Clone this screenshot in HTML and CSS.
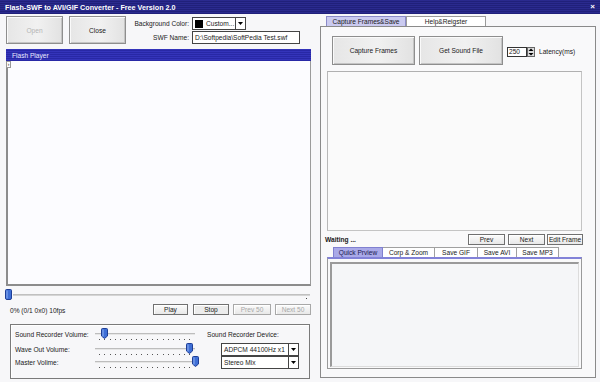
FILE: index.html
```html
<!DOCTYPE html>
<html>
<head>
<meta charset="utf-8">
<link rel="stylesheet" href="styles.css">
</head>
<body>
<div class="window">
  <div class="titlebar">
    <span class="title">Flash-SWF to AVI/GIF Converter - Free Version 2.0</span>
    <span class="xbtn">×</span>
  </div>
  <div class="main">
    <div class="left">
      <div class="toprow">
        <div class="bigbtn disabled">Open</div>
        <div class="bigbtn">Close</div>
        <div class="fields">
          <div class="frow">
            <span class="lbl">Background Color:</span>
            <div class="combo colorcombo"><span class="swatch"></span><span class="ctext">Custom...</span><span class="arrow"><svg width="5" height="3" viewBox="0 0 5 3"><path d="M0 0H5L2.5 3Z" fill="#000"/></svg></span></div>
          </div>
          <div class="frow">
            <span class="lbl">SWF Name:</span>
            <div class="textbox">D:\Softpedia\SoftPedia Test.swf</div>
          </div>
        </div>
      </div>
      <div class="player">
        <div class="phead">Flash Player</div>
        <div class="pbody"><span class="pmark">›</span></div>
      </div>
      <div class="seek">
        <div class="seektrack"></div>
        <span class="seekdot"></span>
        <svg class="thumb seekthumb" width="7" height="11" viewBox="0 0 7 11"><path d="M1.5 0.5H5.5Q6.5 0.5 6.5 1.5V9Q6.5 10.5 5 10.5H2Q0.5 10.5 0.5 9V1.5Q0.5 0.5 1.5 0.5Z" fill="#3f6fd6" stroke="#1e3e96"/><path d="M2 1.5V9.5" stroke="#8fb0f0"/></svg>
      </div>
      <div class="status">
        <span class="stext">0% (0/1 0x0) 10fps</span>
        <div class="sbtns">
          <div class="btn w35">Play</div>
          <div class="btn w36 stop">Stop</div>
          <div class="btn w38 disabled">Prev 50</div>
          <div class="btn w36 disabled">Next 50</div>
        </div>
      </div>
      <div class="group">
        <div class="grow r1">
          <span class="glbl">Sound Recorder Volume:</span>
          <div class="slider">
            <div class="strack"></div><div class="sticks"></div>
            <svg class="thumb" style="left:6px" width="7" height="11" viewBox="0 0 7 11"><path d="M1.5 0.5H5.5Q6.5 0.5 6.5 1.5V8L3.5 10.5L0.5 8V1.5Q0.5 0.5 1.5 0.5Z" fill="#3f6fd6" stroke="#1e3e96"/><path d="M2 1.5V8.5" stroke="#8fb0f0"/></svg>
          </div>
          <span class="devlbl">Sound Recorder Device:</span>
        </div>
        <div class="grow r2">
          <span class="glbl">Wave Out Volume:</span>
          <div class="slider">
            <div class="strack"></div><div class="sticks"></div>
            <svg class="thumb" style="left:91px" width="7" height="11" viewBox="0 0 7 11"><path d="M1.5 0.5H5.5Q6.5 0.5 6.5 1.5V8L3.5 10.5L0.5 8V1.5Q0.5 0.5 1.5 0.5Z" fill="#3f6fd6" stroke="#1e3e96"/><path d="M2 1.5V8.5" stroke="#8fb0f0"/></svg>
          </div>
          <div class="combo devcombo"><span class="ctext">ADPCM 44100Hz x1</span><span class="arrow"><svg width="5" height="3" viewBox="0 0 5 3"><path d="M0 0H5L2.5 3Z" fill="#000"/></svg></span></div>
        </div>
        <div class="grow r3">
          <span class="glbl">Master Volime:</span>
          <div class="slider">
            <div class="strack"></div><div class="sticks"></div>
            <svg class="thumb" style="left:97px" width="7" height="11" viewBox="0 0 7 11"><path d="M1.5 0.5H5.5Q6.5 0.5 6.5 1.5V8L3.5 10.5L0.5 8V1.5Q0.5 0.5 1.5 0.5Z" fill="#3f6fd6" stroke="#1e3e96"/><path d="M2 1.5V8.5" stroke="#8fb0f0"/></svg>
          </div>
          <div class="combo devcombo"><span class="ctext">Stereo Mix</span><span class="arrow"><svg width="5" height="3" viewBox="0 0 5 3"><path d="M0 0H5L2.5 3Z" fill="#000"/></svg></span></div>
        </div>
      </div>
    </div>
    <div class="right">
      <div class="tabs">
        <div class="tab active w80">Capture Frames&amp;Save</div>
        <div class="tab w80">Help&amp;Reigster</div>
      </div>
      <div class="frame">
        <div class="caprow">
          <div class="bigbtn capbtn">Capture Frames</div>
          <div class="bigbtn capbtn">Get Sound File</div>
          <div class="spin">
            <div class="spinbox">250</div>
            <div class="spinbtn"><svg width="6" height="8" viewBox="0 0 6 8"><path d="M3 0.5L5.5 3H0.5Z" fill="#000"/><path d="M0.5 5H5.5L3 7.5Z" fill="#000"/></svg></div>
          </div>
          <span class="latency">Latency(ms)</span>
        </div>
        <div class="capture"></div>
        <div class="waitrow">
          <span class="waiting">Waiting ...</span>
          <div class="wbtns">
            <div class="btn w37">Prev</div>
            <div class="btn w37">Next</div>
            <div class="btn w36">Edit Frame</div>
          </div>
        </div>
        <div class="tabs2">
          <div class="tab2 active2" style="width:50px">Quick Prview</div>
          <div class="tab2" style="width:52px">Corp &amp; Zoom</div>
          <div class="tab2" style="width:43px">Save GIF</div>
          <div class="tab2" style="width:39px">Save AVI</div>
          <div class="tab2" style="width:42px">Save MP3</div>
        </div>
        <div class="panel2"><div class="inner2"></div></div>
      </div>
    </div>
  </div>
</div>
</body>
</html>
```
FILE: styles.css
```css
* { box-sizing: border-box; margin: 0; padding: 0; }
html, body { width: 600px; height: 382px; overflow: hidden; }
body {
  background: #f7f7f9;
  font-family: "Liberation Sans", Arial, sans-serif;
  font-size: 6.6px;
  color: #1a1a1a;
}
.window { display: flex; flex-direction: column; height: 382px; }

.titlebar {
  height: 14px;
  background: repeating-linear-gradient(#2a2a8e 0 1px, #20207a 1px 2px);
  display: flex; align-items: center; justify-content: space-between;
  padding: 0 5px 0 5px;
  color: #fff;
}
.title { font-weight: bold; font-size: 7.2px; }
.xbtn { font-size: 8px; font-weight: bold; line-height: 8px; }

.main { display: flex; flex: 1; }
.left { width: 316px; display: flex; flex-direction: column; }
.right { flex: 1; padding: 2px 4px 4px 4px; display: flex; flex-direction: column; }

/* top controls */
.toprow { display: flex; margin-top: 2px; padding-left: 6px; height: 28px; }
.bigbtn {
  width: 57px; height: 28px;
  border: 1px solid #8e8e8e;
  background: linear-gradient(90deg, #e6e6e6, #f1f1f1 55%, #e2e2e2);
  box-shadow: inset 1px 1px #fafafa, inset -1px -1px #c4c4c4;
  display: flex; align-items: center; justify-content: center;
  color: #1a1a1a;
}
.bigbtn + .bigbtn { margin-left: 6px; }
.bigbtn.disabled { color: #b4b4b4; }
.fields { margin-left: 6px; padding-top: 1px; display: flex; flex-direction: column; gap: 1px; }
.frow { display: flex; align-items: center; height: 13px; }
.lbl { width: 57px; text-align: right; margin-right: 3px; }
.combo {
  height: 13px; border: 1px solid #444; background: #fff;
  display: flex; align-items: center;
}
.colorcombo { width: 54px; }
.swatch { width: 8px; height: 8px; background: #000; margin: 0 3px 0 2px; }
.ctext { flex: 1; padding-left: 1px; white-space: nowrap; }
.colorcombo .ctext { padding-left: 0; }
.arrow {
  width: 10px; height: 11px; border-left: 1px solid #444;
  display: flex; align-items: center; justify-content: center; background: #fff;
}
.textbox {
  width: 108px; height: 13px; border: 1px solid #444; background: #fff;
  padding-left: 2px; display: flex; align-items: center; white-space: nowrap;
}

/* flash player */
.player { margin: 5px 5px 0 6px; height: 237px; display: flex; flex-direction: column; }
.phead {
  height: 12px; padding-left: 6px; color: #e8e8ff;
  background: repeating-linear-gradient(#3434ba 0 1px, #2828a6 1px 2px);
  display: flex; align-items: center;
}
.pbody {
  flex: 1; background: #fcfcff;
  border-left: 2px solid #8c8c8c; border-right: 1px solid #9a9a9a; border-bottom: 2px solid #8c8c8c;
  position: relative;
}
.pmark {
  position: absolute; left: -2px; top: 0; width: 5px; height: 7px;
  background: #fff; border: 1px solid #999; font-size: 6px; line-height: 5px; text-align: center; color: #333;
}

/* seek */
.seek { height: 16px; position: relative; }
.seektrack { position: absolute; left: 13px; right: 6px; top: 8px; height: 2px; background: #d4d4d4; border-top: 1px solid #c0c0c0; }
.seekdot { position: absolute; left: 306px; top: 12px; width: 1px; height: 1px; background: #444; }
.thumb { position: absolute; top: 0; }
.seekthumb { left: 5px; top: 3px; }

.status { height: 15px; display: flex; align-items: center; padding-left: 10px; }
.stext { width: 143px; padding-top: 1px; }
.sbtns { display: flex; gap: 0; }
.btn {
  height: 11px; border: 1px solid #707070;
  background: linear-gradient(#fbfbfb, #e8e8e8);
  box-shadow: inset 1px 1px #fff;
  display: flex; align-items: center; justify-content: center; white-space: nowrap;
}
.btn.disabled { color: #a8a8a8; border-color: #a8a8a8; }
.btn.stop { background: #ececec; }
.w35 { width: 35px; }
.w36 { width: 36px; }
.w37 { width: 37px; }
.w38 { width: 38px; }
.sbtns .btn + .btn { margin-left: 4px; }
.sbtns .stop { margin-left: 5px !important; }

/* group box */
.group {
  margin: 7px 6px 0 10px; height: 55px;
  border: 1px solid #7a7a7a;
  box-shadow: inset 1px 1px #fff;
  padding: 2px 0 0 4px;
}
.grow { display: flex; align-items: center; height: 13px; }
.grow.r1 { height: 14px; }
.grow.r2 { margin-top: 2px; }
.glbl { width: 80px; white-space: nowrap; }
.slider { width: 100px; height: 13px; position: relative; }
.r1 .slider { margin-top: 1px; }
.strack { position: absolute; left: 0; right: 0; top: 5px; height: 2px; border-top: 1px solid #bdbdbd; background: #e6e6e6; }
.sticks {
  position: absolute; left: 4px; right: 4px; top: 11px; height: 1px;
  background: repeating-linear-gradient(90deg, #555 0 1px, transparent 1px 5.3px);
}
.devlbl { margin-left: 12px; white-space: nowrap; }
.devcombo { width: 78px; margin-left: 26px; }
.devcombo .ctext { padding-left: 2px; }

/* right side */
.tabs { display: flex; padding-left: 6px; height: 10px; }
.tab {
  height: 10px; border: 1px solid #9a9a9a; border-bottom: none;
  background: #fff; display: flex; align-items: center; justify-content: center;
}
.tab.active { background: #cacaf0; border-color: #8a8ac8; }
.w80 { width: 80px; }
.frame {
  flex: 1; border: 1px solid #8a8a8a; background: #f9f9fa;
  display: flex; flex-direction: column;
}
.caprow { display: flex; align-items: center; padding: 9px 0 0 11px; height: 38px; }
.capbtn { width: 83px; height: 29px; }
.caprow .bigbtn + .bigbtn { margin-left: 4px; width: 84px; }
.spin { display: flex; margin-left: 4px; margin-top: 2px; }
.spinbox { width: 20px; height: 10px; border: 1px solid #333; background: #fff; padding-left: 1px; display: flex; align-items: center; }
.spinbtn { width: 8px; height: 10px; border: 1px solid #666; background: #dcdcdc; display: flex; align-items: center; justify-content: center; }
.latency { margin-left: 4px; margin-top: 2px; }
.capture {
  margin: 6px 13px 0 6px; height: 160px;
  border: 1px solid #c4c4c4; border-top-color: #b0b0b0; border-left-color: #b8b8b8;
  background: #fafafa;
}
.waitrow { display: flex; align-items: center; margin-top: 2px; height: 13px; padding-left: 4px; padding-right: 12px; }
.waiting { font-weight: bold; flex: 1; }
.wbtns { display: flex; }
.wbtns .btn + .btn { margin-left: 3px; }
.wbtns .btn:last-child { margin-left: 2px; }
.tabs2 { display: flex; padding-left: 12px; margin-top: 1px; height: 10px; }
.tab2 {
  height: 10px; border: 1px solid #a0a0a0; border-bottom: none; border-left: none;
  background: #fff; display: flex; align-items: center; justify-content: center; white-space: nowrap;
}
.tab2:first-child { border-left: 1px solid #a0a0a0; }
.tab2.active2 { background: #a9a9e8; border-color: #8080d0; color: #1a1a50; }
.panel2 {
  margin: 0 13px 0 6px; height: 112px;
  border: 1px solid #9a9a9a; border-top: 2px solid #8282d8;
  padding: 3px 2px 1px 2px; background: #f9f9fa;
}
.inner2 {
  height: 100%; background: #f5f6f8;
  border: 2px solid #9a9a9a; border-right-color: #dcdcdc; border-bottom-color: #dcdcdc;
  border-right-width: 1px; border-bottom-width: 1px;
}
```
